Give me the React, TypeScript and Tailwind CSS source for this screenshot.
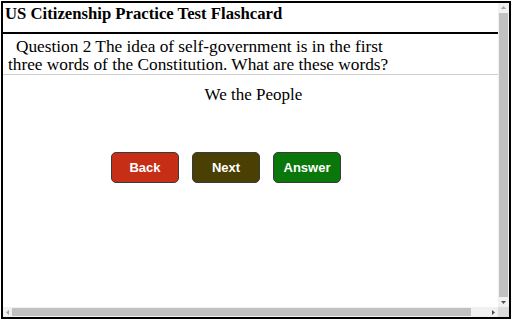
import React from 'react';

const serif = { fontFamily: '"Liberation Serif", "Times New Roman", serif' };

function VScrollbar() {
  return (
    <div className="w-[11px] bg-[#f1f1f1] flex flex-col items-center">
      <div className="h-[9px] flex items-center justify-center">
        <svg width="5" height="3" viewBox="0 0 5 3"><path d="M0 3 L2.5 0 L5 3 Z" fill="#a3a3a3" /></svg>
      </div>
      <div className="flex-1 w-[9px] bg-[#c1c1c1] my-[1px]" />
      <div className="h-[9px] flex items-center justify-center">
        <svg width="5" height="3" viewBox="0 0 5 3"><path d="M0 0 L2.5 3 L5 0 Z" fill="#505050" /></svg>
      </div>
    </div>
  );
}

function HScrollbar() {
  return (
    <div className="h-[10px] bg-[#f1f1f1] flex items-center">
      <div className="w-[9px] h-full flex items-center justify-center">
        <svg width="3" height="5" viewBox="0 0 3 5"><path d="M3 0 L0 2.5 L3 5 Z" fill="#a3a3a3" /></svg>
      </div>
      <div className="flex-1 h-[8px] bg-[#c1c1c1] mr-[18px]" />
      <div className="w-[9px] h-full flex items-center justify-center">
        <svg width="3" height="5" viewBox="0 0 3 5"><path d="M0 0 L3 2.5 L0 5 Z" fill="#505050" /></svg>
      </div>
      <div className="w-[11px] h-full bg-[#dcdcdc]" />
    </div>
  );
}

function Btn({ label, color }: { label: string; color: string }) {
  return (
    <button
      className={`w-[68px] h-[31px] rounded-[5px] border border-[#3a3a3a] text-white font-bold text-[13px] ${color}`}
      style={{ fontFamily: '"Liberation Sans", Arial, sans-serif' }}
    >
      {label}
    </button>
  );
}

export default function App() {
  return (
    <div className="w-[512px] h-[321px] bg-white pt-[1px] px-[1px] pb-[2px]">
      <div className="h-full border-2 border-black flex flex-col">
        <div className="flex flex-1 min-h-0">
          <div className="flex-1 min-w-0 bg-white text-black" style={serif}>
            <div className="h-[31px] pl-[2px] pt-[1px] text-[16.7px] font-bold leading-[20px] border-b-2 border-black">
              US Citizenship Practice Test Flashcard
            </div>
            <div className="border-b border-[#cfcfcf] text-[17.3px] leading-[18px] pt-[4px] pb-0 whitespace-nowrap">
              <div className="pl-[13px]">Question 2 The idea of self-government is in the first</div>
              <div className="pl-[5px]">three words of the Constitution. What are these words?</div>
            </div>
            <div className="text-center text-[17px] leading-[20px] pt-[10px] pl-[6px]">We the People</div>
            <div className="flex gap-[13px] mt-[47px] pl-[108px]">
              <Btn label="Back" color="bg-[#c62e16]" />
              <Btn label="Next" color="bg-[#4a4004]" />
              <Btn label="Answer" color="bg-[#0a770a]" />
            </div>
          </div>
          <VScrollbar />
        </div>
        <HScrollbar />
      </div>
    </div>
  );
}
